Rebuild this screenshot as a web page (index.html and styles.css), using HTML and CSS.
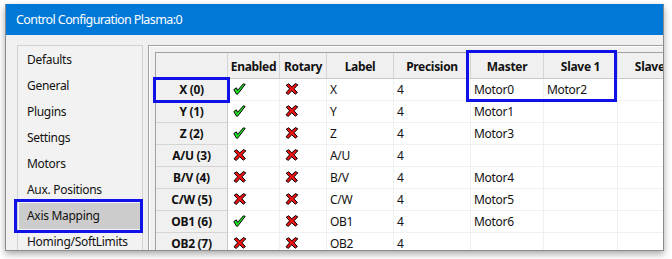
FILE: index.html
```html
<!DOCTYPE html>
<html>
<head>
<meta charset="utf-8">
<title>Control Configuration</title>
<link rel="stylesheet" href="styles.css">
</head>
<body>
<svg class="defs" width="0" height="0" aria-hidden="true">
  <defs>
    <symbol id="ok" viewBox="0 0 13 12">
      <path d="M0.8 6.6 L3.4 4.8 L4.6 7.4 L10.4 0.8 L12.2 1.4 L6.2 9.2 L4.4 11.4 L3.4 11 Z" fill="#22e022" stroke="#000" stroke-width="1" stroke-linejoin="round"/>
    </symbol>
    <symbol id="no" viewBox="0 0 14 12">
      <path d="M1.2 2.2 L3.6 0.8 L6.8 3.8 L10.4 0.6 L12.8 1.8 L9 5.8 L12.4 9.6 L10.2 11.2 L6.8 7.8 L3.2 11.4 L1 9.8 L4.6 5.8 Z" fill="#ee1111" stroke="#000" stroke-width="1" stroke-linejoin="round"/>
    </symbol>
  </defs>
</svg>

<div class="window">
  <div class="titlebar">Control Configuration Plasma:0</div>
  <div class="content">
    <ul class="sidebar">
      <li>Defaults</li>
      <li>General</li>
      <li>Plugins</li>
      <li>Settings</li>
      <li>Motors</li>
      <li>Aux. Positions</li>
      <li class="selected">Axis Mapping</li>
      <li>Homing/SoftLimits</li>
    </ul>
    <div class="frame">
      <div class="grid">
        <div class="hd corner"></div>
        <div class="hd">Enabled</div>
        <div class="hd">Rotary</div>
        <div class="hd">Label</div>
        <div class="hd">Precision</div>
        <div class="hd">Master</div>
        <div class="hd">Slave 1</div>
        <div class="hd">Slave 2</div>

        <div class="rh">X (0)</div>
        <div class="ic"><svg><use href="#ok"/></svg></div>
        <div class="ic"><svg class="x"><use href="#no"/></svg></div>
        <div class="cell">X</div><div class="cell">4</div><div class="cell">Motor0</div><div class="cell">Motor2</div><div class="cell"></div>

        <div class="rh">Y (1)</div>
        <div class="ic"><svg><use href="#ok"/></svg></div>
        <div class="ic"><svg class="x"><use href="#no"/></svg></div>
        <div class="cell">Y</div><div class="cell">4</div><div class="cell">Motor1</div><div class="cell"></div><div class="cell"></div>

        <div class="rh">Z (2)</div>
        <div class="ic"><svg><use href="#ok"/></svg></div>
        <div class="ic"><svg class="x"><use href="#no"/></svg></div>
        <div class="cell">Z</div><div class="cell">4</div><div class="cell">Motor3</div><div class="cell"></div><div class="cell"></div>

        <div class="rh">A/U (3)</div>
        <div class="ic"><svg class="x"><use href="#no"/></svg></div>
        <div class="ic"><svg class="x"><use href="#no"/></svg></div>
        <div class="cell">A/U</div><div class="cell">4</div><div class="cell"></div><div class="cell"></div><div class="cell"></div>

        <div class="rh">B/V (4)</div>
        <div class="ic"><svg class="x"><use href="#no"/></svg></div>
        <div class="ic"><svg class="x"><use href="#no"/></svg></div>
        <div class="cell">B/V</div><div class="cell">4</div><div class="cell">Motor4</div><div class="cell"></div><div class="cell"></div>

        <div class="rh">C/W (5)</div>
        <div class="ic"><svg class="x"><use href="#no"/></svg></div>
        <div class="ic"><svg class="x"><use href="#no"/></svg></div>
        <div class="cell">C/W</div><div class="cell">4</div><div class="cell">Motor5</div><div class="cell"></div><div class="cell"></div>

        <div class="rh">OB1 (6)</div>
        <div class="ic"><svg><use href="#ok"/></svg></div>
        <div class="ic"><svg class="x"><use href="#no"/></svg></div>
        <div class="cell">OB1</div><div class="cell">4</div><div class="cell">Motor6</div><div class="cell"></div><div class="cell"></div>

        <div class="rh">OB2 (7)</div>
        <div class="ic"><svg class="x"><use href="#no"/></svg></div>
        <div class="ic"><svg class="x"><use href="#no"/></svg></div>
        <div class="cell">OB2</div><div class="cell">4</div><div class="cell"></div><div class="cell"></div><div class="cell"></div>
      </div>
    </div>
  </div>
</div>

<div class="mark mark-axis"></div>
<div class="mark mark-x"></div>
<div class="mark mark-master"></div>
</body>
</html>
```
FILE: styles.css
```css
* { box-sizing: border-box; }
html, body { margin: 0; padding: 0; }
body {
  position: relative;
  width: 672px;
  height: 259px;
  background: #ffffff;
  font-family: "Noto Sans", "Open Sans", sans-serif;
  font-size: 12px;
  letter-spacing: -0.3px;
  color: #111;
  overflow: hidden;
}
.defs { position: absolute; width: 0; height: 0; }

.window {
  margin: 4px 0 0 5px;
  width: 659px;
  height: 247px;
  border: 1px solid #8c8c8c;
  border-top-color: #0078d7;
  background: #f0f0f0;
  box-shadow: 0 3px 7px rgba(0,0,0,0.35);
  overflow: hidden;
  display: flex;
  flex-direction: column;
}
.titlebar {
  height: 30px;
  background: #0078d7;
  color: #fff;
  font-size: 12.5px;
  letter-spacing: -0.6px;
  line-height: 30px;
  padding-left: 10px;
  flex: none;
}
.content {
  flex: 1;
  display: flex;
  align-items: flex-start;
  padding: 10px 0 0 11px;
  gap: 5px;
  min-height: 0;
}
.sidebar {
  list-style: none;
  margin: 0;
  padding: 1px 0 0 0;
  width: 126px;
  height: 220px;
  flex: none;
  border: 1px solid #d2d2d2;
  background: #f2f2f2;
}
.sidebar li {
  height: 26px;
  line-height: 26px;
  padding-left: 8px;
  margin: 0 1px;
  white-space: nowrap;
}
.sidebar li.selected { background: #cccccc; }

.frame {
  flex: none;
  width: 600px;
  height: 220px;
  border-left: 1px solid #a0a0a0;
  border-top: 1px solid #a0a0a0;
  box-shadow: inset 1px 1px 0 #ffffff;
  padding: 6px 0 0 6px;
}
.grid {
  display: grid;
  grid-template-columns: 72px 52px 47px 67px 77px 73px 74px 74px;
  grid-auto-rows: 22px;
  grid-template-rows: 26px;
  width: max-content;
  border-left: 1px solid #a0a0a0;
  border-top: 1px solid #a0a0a0;
  background: #fff;
}
.grid > div {
  border-right: 1px solid #f0f0f0;
  border-bottom: 1px solid #f0f0f0;
  white-space: nowrap;
  overflow: hidden;
}
.grid > .hd {
  background: #f0f0f0;
  border-right-color: #d5d5d5;
  border-bottom-color: #c8c8c8;
  font-weight: bold;
  text-align: center;
  line-height: 27px;
}
.grid > .rh {
  background: #f0f0f0;
  border-right-color: #c8c8c8;
  border-bottom-color: #d5d5d5;
  font-weight: bold;
  text-align: center;
  line-height: 21px;
}
.grid > .cell {
  padding-left: 3px;
  line-height: 21px;
}
.grid > .ic {
  padding: 4px 0 0 5px;
}
.ic svg { display: block; width: 13px; height: 12px; }
.ic svg.x { width: 14px; }

.mark {
  position: absolute;
  border: 3px solid #1010e8;
}
.mark-axis { left: 14px; top: 199px; width: 129px; height: 34px; }
.mark-x { left: 153px; top: 77px; width: 77px; height: 26px; }
.mark-master { left: 466px; top: 50px; width: 151px; height: 52px; }
```
